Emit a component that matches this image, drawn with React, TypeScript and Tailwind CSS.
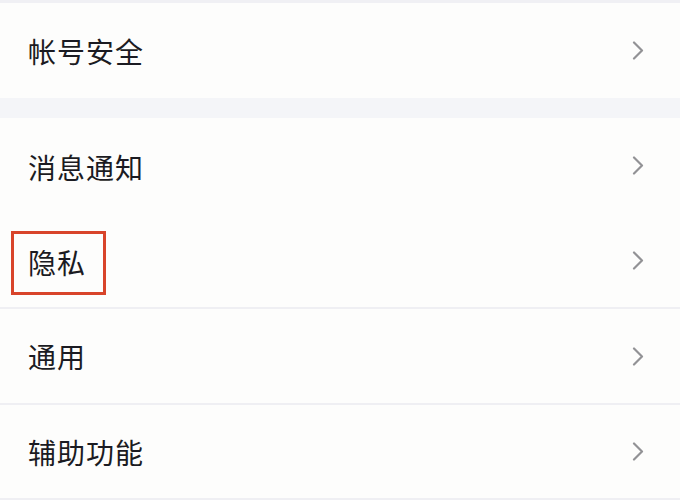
import React from "react";

function Chevron() {
  return (
    <svg width="12" height="19" viewBox="0 0 12 19" fill="none" className="shrink-0">
      <path d="M2 1.5 L10 9.5 L2 17.5" stroke="#929295" strokeWidth="2.2" strokeLinecap="round" strokeLinejoin="round" />
    </svg>
  );
}

function Row({ label, h, children, textPad = "" }: { label: string; h: string; children?: React.ReactNode; textPad?: string }) {
  return (
    <div className={`relative flex items-center justify-between pl-[28px] pr-[36px] ${h}`}>
      <span className={`text-[28px] leading-none tracking-[1px] text-[#1b1b22] ${textPad}`}>{label}</span>
      <Chevron />
      {children}
    </div>
  );
}

export default function App() {
  return (
    <div
      className="w-[680px] h-[500px] overflow-hidden bg-[#fdfdfc] flex flex-col"
      style={{ fontFamily: '"Noto Sans CJK SC", "Noto Sans", sans-serif' }}
    >
      <div className="h-[3px] bg-[#f0f0f4]" />
      <Row label="帐号安全" h="h-[95px]" />
      <div className="h-[20px] bg-[#f4f5f8]" />
      <Row label="消息通知" h="h-[95px]" textPad="pt-[3px]" />
      <Row label="隐私" h="h-[94px]" textPad="pt-[3px]">
        <div className="absolute left-[11px] top-[18px] w-[95px] h-[64px] border-[3px] border-[#d8442a]" />
      </Row>
      <div className="h-[2px] bg-[#efeff3]" />
      <Row label="通用" h="h-[94px]" />
      <div className="h-[2px] bg-[#efeff3]" />
      <Row label="辅助功能" h="h-[93px]" />
      <div className="h-[2px] bg-[#efeff3]" />
    </div>
  );
}
